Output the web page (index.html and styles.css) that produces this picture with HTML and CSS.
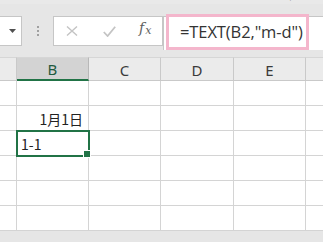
FILE: index.html
```html
<!DOCTYPE html>
<html lang="ja">
<head>
<meta charset="utf-8">
<link rel="stylesheet" href="styles.css">
</head>
<body>
<div class="app">
  <div class="ribbon">
    <span class="rb rb1">ホ</span>
    <span class="rb rb2">ツール</span>
    <span class="rb rb3">ク</span>
  </div>
  <div class="fbar">
    <div class="namebox">
      <svg class="arrow" width="7" height="4" viewBox="0 0 7 4"><path d="M0 0H7L3.5 4Z" fill="#505050"/></svg>
    </div>
    <div class="grip"><i></i><i></i><i></i></div>
    <div class="btns">
      <svg class="ico" width="12" height="10" viewBox="0 0 12 10"><path d="M1 0.5L11 9.5M11 0.5L1 9.5" stroke="#c4c4c4" stroke-width="1.4" fill="none"/></svg>
      <svg class="ico" width="13" height="11" viewBox="0 0 13 11"><path d="M0.8 6L4.6 10L12.2 0.8" stroke="#c4c4c4" stroke-width="1.8" fill="none"/></svg>
      <span class="fx">f<sub>x</sub></span>
    </div>
    <div class="input">
      <div class="formula">=TEXT(B2,"m-d")</div>
    </div>
  </div>
  <div class="grid">
    <div class="h corner"></div>
    <div class="h sel">B</div>
    <div class="h">C</div>
    <div class="h">D</div>
    <div class="h">E</div>
    <div class="h last"></div>

    <div class="c rh"></div><div class="c"></div><div class="c"></div><div class="c"></div><div class="c"></div><div class="c last"></div>
    <div class="c rh"></div><div class="c right">1月1日</div><div class="c"></div><div class="c"></div><div class="c"></div><div class="c last"></div>
    <div class="c rh"></div><div class="c active">1-1</div><div class="c"></div><div class="c"></div><div class="c"></div><div class="c last"></div>
    <div class="c rh"></div><div class="c"></div><div class="c"></div><div class="c"></div><div class="c"></div><div class="c last"></div>
    <div class="c rh"></div><div class="c"></div><div class="c"></div><div class="c"></div><div class="c"></div><div class="c last"></div>
    <div class="c rh"></div><div class="c"></div><div class="c"></div><div class="c"></div><div class="c"></div><div class="c last"></div>
  </div>
</div>
</body>
</html>
```
FILE: styles.css
```css
* { box-sizing: border-box; }
html, body { margin: 0; padding: 0; }
body { background: #ffffff; font-family: "Noto Sans CJK JP", "Noto Sans", sans-serif; }
.app { width: 323px; height: 242px; overflow: hidden; background: #e6e6e6; position: relative; }

.ribbon { height: 4px; overflow: hidden; position: relative; background: #e9e9e9; }
.rb { position: absolute; top: -13px; font-size: 12px; line-height: 16px; color: #444; }
.rb1 { left: 6px; }
.rb2 { left: 129px; }
.rb3 { left: 287px; }

.fbar { height: 53px; display: flex; align-items: flex-start; padding-top: 12px; }
.namebox { width: 22px; height: 30px; background: #fff; border: 1px solid #c6c6c6; border-left: none; display: flex; align-items: center; justify-content: flex-start; padding-left: 9px; }
.grip { width: 31px; height: 30px; display: flex; flex-direction: column; align-items: center; justify-content: center; gap: 2px; }
.grip i { display: block; width: 2px; height: 2px; background: #a0a0a0; }
.btns { width: 110px; height: 30px; background: #fff; border: 1px solid #c6c6c6; display: flex; align-items: center; padding-left: 12px; }
.btns .ico { flex: none; }
.btns .ico:nth-child(1) { margin-right: 25px; }
.btns .ico:nth-child(2) { margin-right: 23px; }
.fx { font-family: "DejaVu Serif", "Liberation Serif", serif; font-style: italic; font-size: 14px; color: #606060; line-height: 14px; margin-top: -3px; }
.fx sub { font-size: 11px; vertical-align: -1px; margin-left: 1px; }
.input { flex: 1; height: 34px; background: #fff; border-top: 1px solid #c6c6c6; border-left: 1px solid #c6c6c6; margin-top: 0; padding-left: 2px; }
.formula { width: 143px; height: 36px; margin-top: -3px; border: 3px solid #f4b6cc; font-family: "Open Sans", "Noto Sans", sans-serif; font-size: 16.5px; color: #333; line-height: 29px; padding-left: 11px; white-space: nowrap; letter-spacing: -0.1px; }

.grid { display: grid; grid-template-columns: 17px 72px 72px 73px 72px 17px; grid-template-rows: 24px repeat(6, 25px); background: #fff; }
.h { background: #ebebeb; border-right: 1px solid #c9c9c9; border-bottom: 1px solid #c9c9c9; border-top: 1px solid #d6d6d6; font-family: "Noto Sans", "Open Sans", sans-serif; font-size: 15px; color: #3a3a3a; display: flex; align-items: center; justify-content: center; padding-top: 1px; }
.h.corner { background: #ebebeb; }
.h.sel { background: #d3d3d3; color: #1f5a40; border-bottom: 2px solid #217346; border-right-color: #b8b8b8; }
.h.last { border-right: none; }
.c { border-right: 1px solid #d4d4d4; border-bottom: 1px solid #d4d4d4; font-size: 14px; color: #222; line-height: 24px; padding: 0 3px; white-space: nowrap; position: relative; }
.c.rh { background: #fff; }
.c.last { border-right: none; }
.c.right { text-align: right; padding-right: 5px; padding-top: 1px; }
.c.active { outline: 2px solid #217346; outline-offset: -1px; padding-left: 4px; padding-top: 1px; z-index: 1; }
.c.active::after { content: ""; position: absolute; right: -3px; bottom: -3px; width: 6px; height: 6px; background: #217346; border: 1px solid #fff; }
```
